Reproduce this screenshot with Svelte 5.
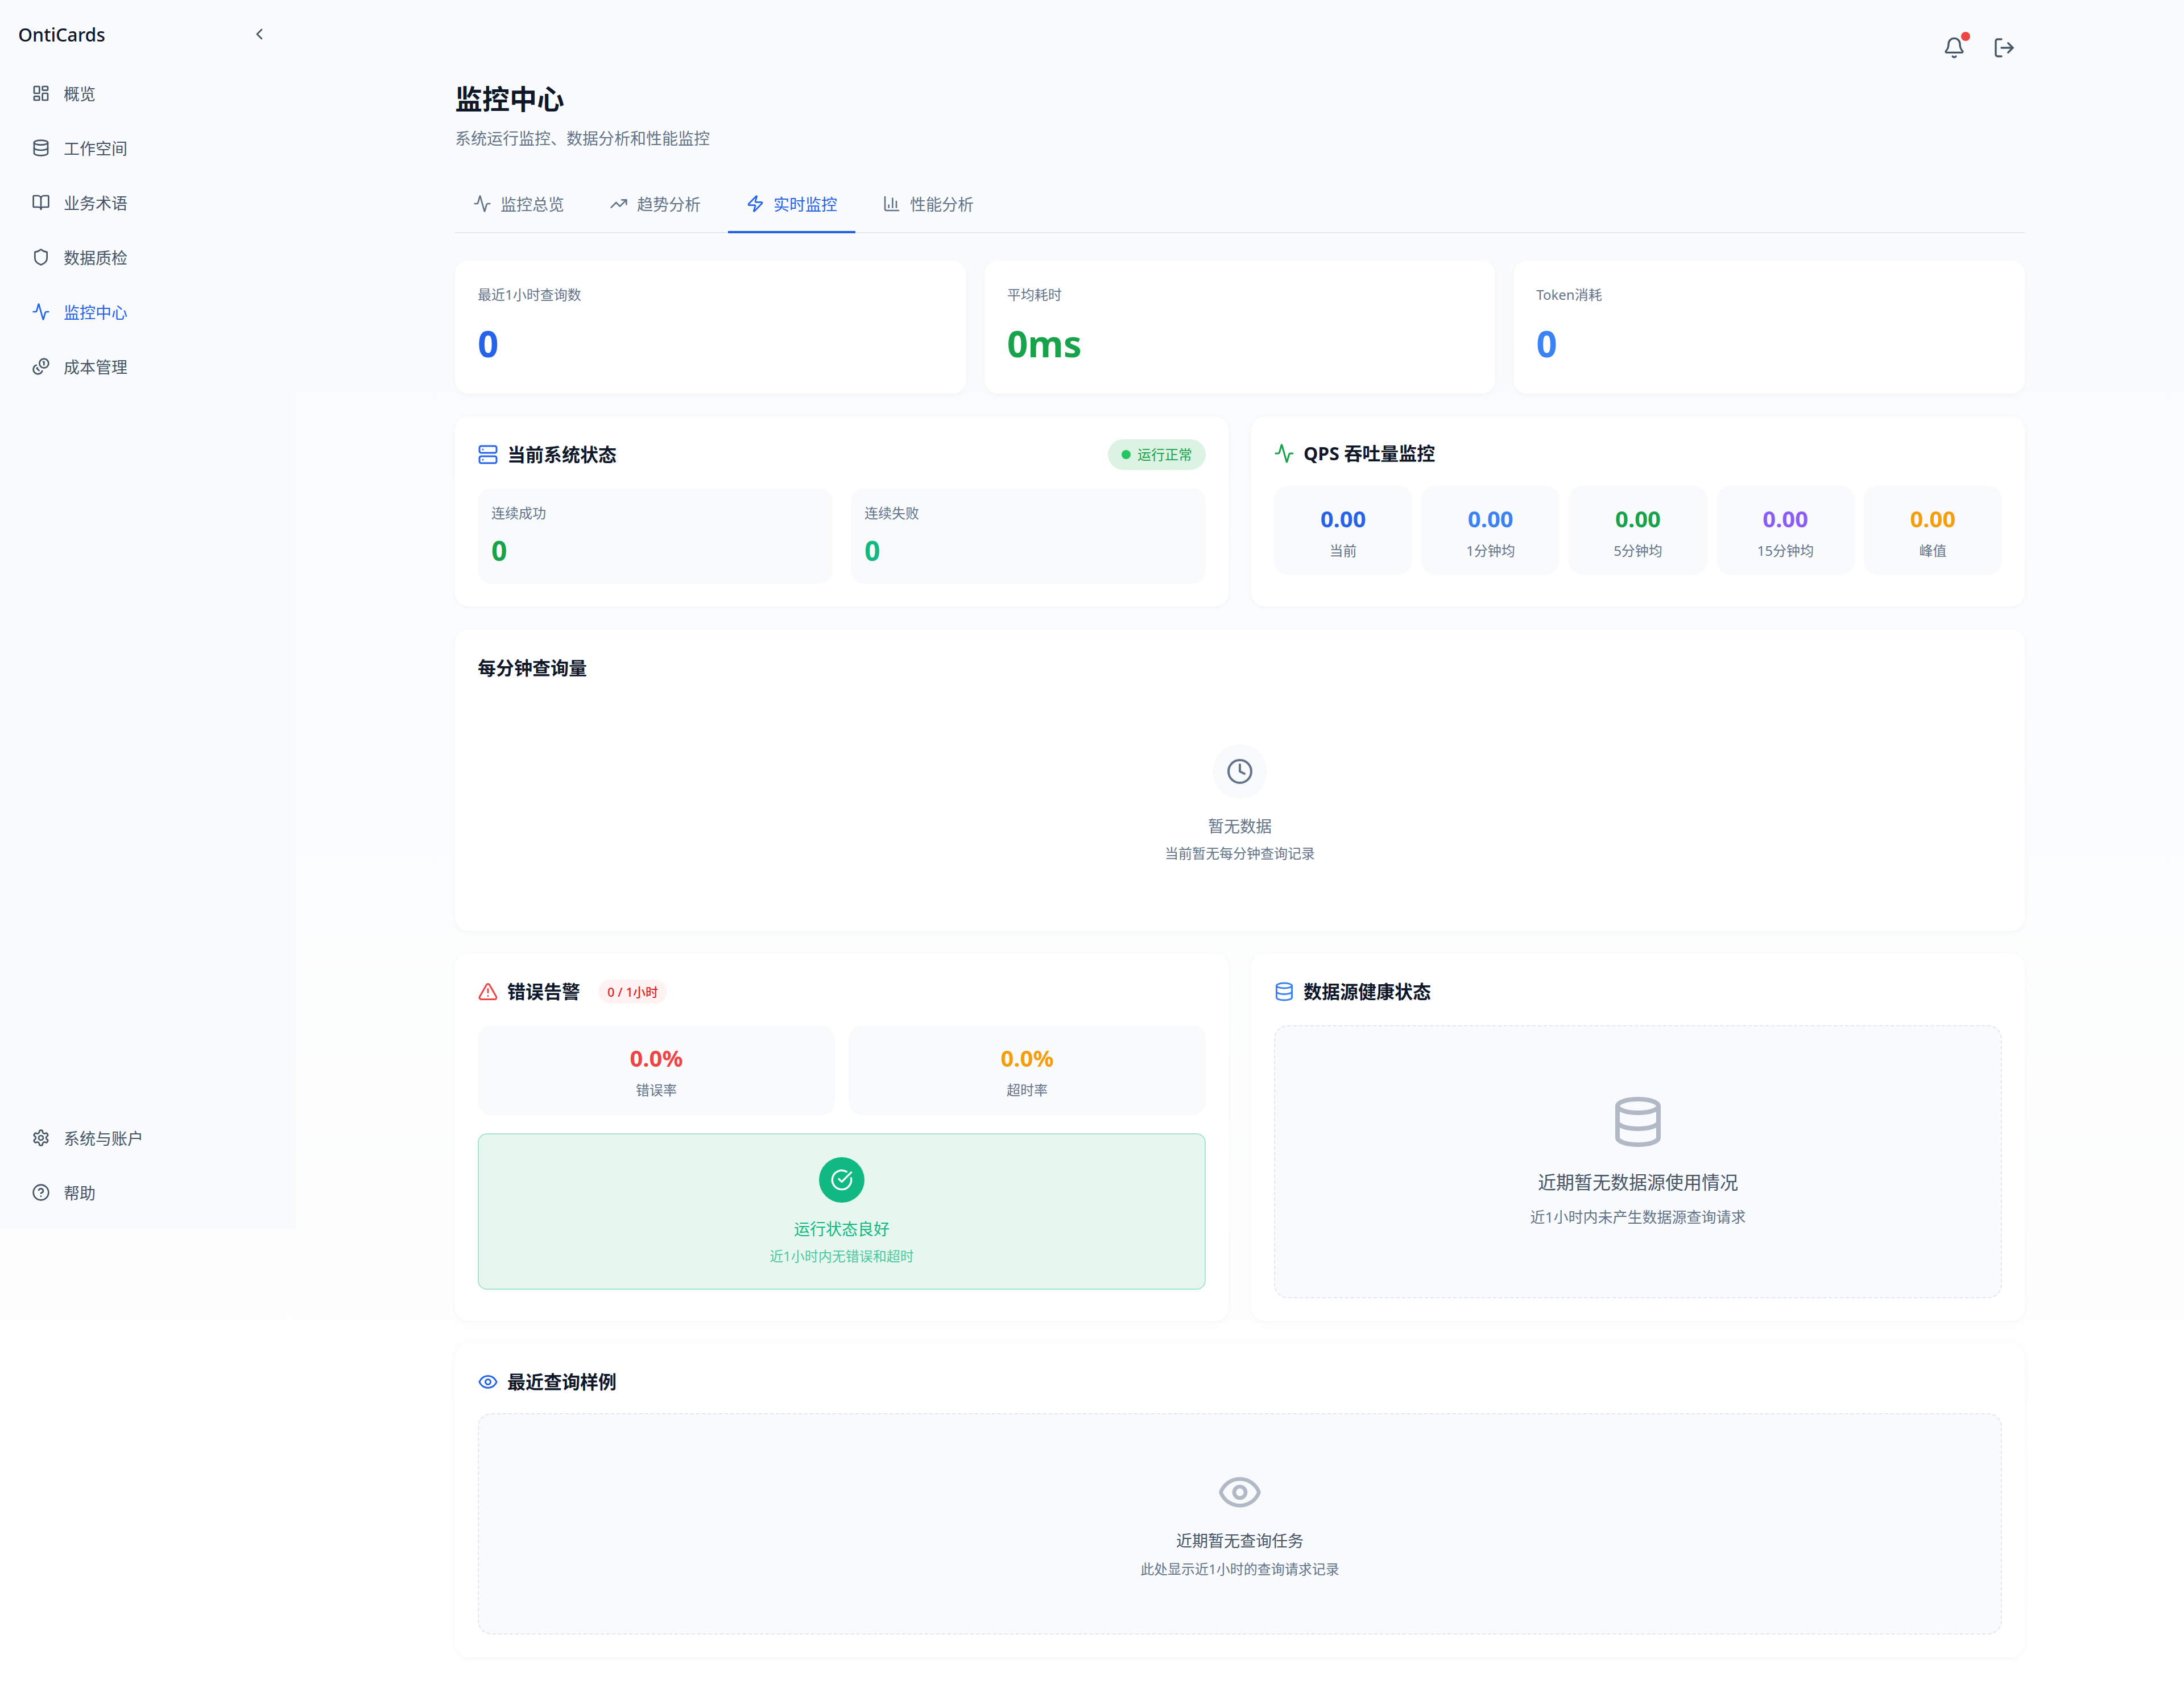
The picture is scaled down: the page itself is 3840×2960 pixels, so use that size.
<script>
  const ICONS = {
    dashboard: '<rect x="3" y="3" width="7" height="9" rx="1"/><rect x="14" y="3" width="7" height="5" rx="1"/><rect x="14" y="12" width="7" height="9" rx="1"/><rect x="3" y="16" width="7" height="5" rx="1"/>',
    database: '<ellipse cx="12" cy="5" rx="9" ry="3"/><path d="M3 5V19A9 3 0 0 0 21 19V5"/><path d="M3 12A9 3 0 0 0 21 12"/>',
    book: '<path d="M12 7v14"/><path d="M3 18a1 1 0 0 1-1-1V4a1 1 0 0 1 1-1h5a4 4 0 0 1 4 4 4 4 0 0 1 4-4h5a1 1 0 0 1 1 1v13a1 1 0 0 1-1 1h-6a3 3 0 0 0-3 3 3 3 0 0 0-3-3z"/>',
    shield: '<path d="M20 13c0 5-3.5 7.5-7.66 8.95a1 1 0 0 1-.67-.01C7.5 20.5 4 18 4 13V6a1 1 0 0 1 1-1c2 0 4.5-1.2 6.24-2.72a1.17 1.17 0 0 1 1.52 0C14.51 3.81 17 5 19 5a1 1 0 0 1 1 1z"/>',
    activity: '<path d="M22 12h-2.48a2 2 0 0 0-1.93 1.46l-2.35 8.36a.25.25 0 0 1-.48 0L9.24 2.18a.25.25 0 0 0-.48 0l-2.35 8.36A2 2 0 0 1 4.49 12H2"/>',
    coins: '<circle cx="16" cy="8" r="6"/><path d="M5.91 10.37A6 6 0 1 0 13.66 18"/><path d="M15 6h1v4"/><path d="m7.29 13.88-.7.71 2.82 2.82"/>',
    settings: '<path d="M12.22 2h-.44a2 2 0 0 0-2 2v.18a2 2 0 0 1-1 1.73l-.43.25a2 2 0 0 1-2 0l-.15-.08a2 2 0 0 0-2.73.73l-.22.38a2 2 0 0 0 .73 2.73l.15.1a2 2 0 0 1 1 1.72v.51a2 2 0 0 1-1 1.74l-.15.09a2 2 0 0 0-.73 2.73l.22.38a2 2 0 0 0 2.73.73l.15-.08a2 2 0 0 1 2 0l.43.25a2 2 0 0 1 1 1.73V20a2 2 0 0 0 2 2h.44a2 2 0 0 0 2-2v-.18a2 2 0 0 1 1-1.73l.43-.25a2 2 0 0 1 2 0l.15.08a2 2 0 0 0 2.73-.73l.22-.39a2 2 0 0 0-.73-2.73l-.15-.08a2 2 0 0 1-1-1.74v-.5a2 2 0 0 1 1-1.74l.15-.09a2 2 0 0 0 .73-2.73l-.22-.38a2 2 0 0 0-2.73-.73l-.15.08a2 2 0 0 1-2 0l-.43-.25a2 2 0 0 1-1-1.73V4a2 2 0 0 0-2-2z"/><circle cx="12" cy="12" r="3"/>',
    help: '<circle cx="12" cy="12" r="10"/><path d="M9.09 9a3 3 0 0 1 5.83 1c0 2-3 3-3 3"/><path d="M12 17h.01"/>',
    trending: '<polyline points="22 7 13.5 15.5 8.5 10.5 2 17"/><polyline points="16 7 22 7 22 13"/>',
    zap: '<path d="M4 14a1 1 0 0 1-.78-1.63l9.9-10.2a.5.5 0 0 1 .86.46l-1.92 6.02A1 1 0 0 0 13 10h7a1 1 0 0 1 .78 1.63l-9.9 10.2a.5.5 0 0 1-.86-.46l1.92-6.02A1 1 0 0 0 11 14z"/>',
    chart: '<path d="M3 3v16a2 2 0 0 0 2 2h16"/><path d="M18 17V9"/><path d="M13 17V5"/><path d="M8 17v-3"/>',
    server: '<rect width="20" height="8" x="2" y="2" rx="2"/><rect width="20" height="8" x="2" y="14" rx="2"/><line x1="6" x2="6.01" y1="6" y2="6"/><line x1="6" x2="6.01" y1="18" y2="18"/>',
    alert: '<path d="m21.73 18-8-14a2 2 0 0 0-3.48 0l-8 14A2 2 0 0 0 4 21h16a2 2 0 0 0 1.73-3"/><path d="M12 9v4"/><path d="M12 17h.01"/>',
    eye: '<path d="M2.062 12.348a1 1 0 0 1 0-.696 10.75 10.75 0 0 1 19.876 0 1 1 0 0 1 0 .696 10.75 10.75 0 0 1-19.876 0"/><circle cx="12" cy="12" r="3"/>',
    clock: '<circle cx="12" cy="12" r="10"/><polyline points="12 6 12 12 16 14"/>',
    bell: '<path d="M10.268 21a2 2 0 0 0 3.464 0"/><path d="M3.262 15.326A1 1 0 0 0 4 17h16a1 1 0 0 0 .74-1.673C19.41 13.956 18 12.499 18 8A6 6 0 0 0 6 8c0 4.499-1.411 5.956-2.738 7.326"/>',
    logout: '<path d="m16 17 5-5-5-5"/><path d="M21 12H9"/><path d="M9 21H5a2 2 0 0 1-2-2V5a2 2 0 0 1 2-2h4"/>',
    check: '<path d="M21.801 10A10 10 0 1 1 17 3.335"/><path d="m9 11 3 3L22 4"/>',
    chevron: '<path d="m15 18-6-6 6-6"/>'
  };

  const navTop = [
    { icon: 'dashboard', label: '概览' },
    { icon: 'database', label: '工作空间' },
    { icon: 'book', label: '业务术语' },
    { icon: 'shield', label: '数据质检' },
    { icon: 'activity', label: '监控中心', active: true },
    { icon: 'coins', label: '成本管理' }
  ];
  const navBottom = [
    { icon: 'settings', label: '系统与账户' },
    { icon: 'help', label: '帮助' }
  ];
  const tabs = [
    { icon: 'activity', label: '监控总览' },
    { icon: 'trending', label: '趋势分析' },
    { icon: 'zap', label: '实时监控', active: true },
    { icon: 'chart', label: '性能分析' }
  ];
  const stats = [
    { label: '最近1小时查询数', value: '0', color: 'blue' },
    { label: '平均耗时', value: '0ms', color: 'green' },
    { label: 'Token消耗', value: '0', color: 'sky' }
  ];
  const qps = [
    { label: '当前', color: 'blue' },
    { label: '1分钟均', color: 'sky' },
    { label: '5分钟均', color: 'green' },
    { label: '15分钟均', color: 'purple' },
    { label: '峰值', color: 'amber' }
  ];
</script>

{#snippet icon(name)}
  <svg class="icon" viewBox="0 0 24 24" fill="none" stroke="currentColor" stroke-width="2" stroke-linecap="round" stroke-linejoin="round">{@html ICONS[name]}</svg>
{/snippet}

{#snippet navItem(item)}
  <a class="nav-item" class:active={item.active} href="#nav">
    {@render icon(item.icon)}
    <span>{item.label}</span>
  </a>
{/snippet}

<div class="layout">
  <aside class="sidebar">
    <div>
      <div class="brand">
        <span class="logo">OntiCards</span>
        <button class="collapse">{@render icon('chevron')}</button>
      </div>
      <nav class="nav">
        {#each navTop as item}
          {@render navItem(item)}
        {/each}
      </nav>
    </div>
    <nav class="nav">
      {#each navBottom as item}
        {@render navItem(item)}
      {/each}
    </nav>
  </aside>

  <main class="main">
    <div class="topbar">
      <button class="top-btn">{@render icon('bell')}<span class="dot"></span></button>
      <button class="top-btn">{@render icon('logout')}</button>
    </div>

    <h1>监控中心</h1>
    <p class="subtitle">系统运行监控、数据分析和性能监控</p>

    <div class="tabs">
      {#each tabs as tab}
        <button class="tab" class:active={tab.active}>
          {@render icon(tab.icon)}
          <span>{tab.label}</span>
        </button>
      {/each}
    </div>

    <section class="stats">
      {#each stats as s}
        <div class="card stat">
          <div class="stat-label">{s.label}</div>
          <div class="stat-value {s.color}">{s.value}</div>
        </div>
      {/each}
    </section>

    <section class="two-col">
      <div class="card">
        <div class="card-head between">
          <h2 class="blue">{@render icon('server')}<span>当前系统状态</span></h2>
          <span class="badge-ok"><i></i>运行正常</span>
        </div>
        <div class="pair streak">
          <div class="tile left">
            <div class="tile-label">连续成功</div>
            <div class="tile-num green">0</div>
          </div>
          <div class="tile left">
            <div class="tile-label">连续失败</div>
            <div class="tile-num emerald">0</div>
          </div>
        </div>
      </div>

      <div class="card">
        <div class="card-head qps-head">
          <h2 class="green">{@render icon('activity')}<span>QPS 吞吐量监控</span></h2>
        </div>
        <div class="qps">
          {#each qps as q}
            <div class="tile center">
              <div class="tile-value {q.color}">0.00</div>
              <div class="tile-caption">{q.label}</div>
            </div>
          {/each}
        </div>
      </div>
    </section>

    <section class="card minute">
      <h2 class="plain"><span>每分钟查询量</span></h2>
      <div class="no-data">
        <div class="clock-wrap">{@render icon('clock')}</div>
        <div class="no-data-title">暂无数据</div>
        <div class="no-data-sub">当前暂无每分钟查询记录</div>
      </div>
    </section>

    <section class="two-col">
      <div class="card">
        <div class="card-head">
          <h2 class="red">{@render icon('alert')}<span>错误告警</span></h2>
          <span class="badge-err">0 / 1小时</span>
        </div>
        <div class="pair errors">
          <div class="tile center">
            <div class="tile-value red">0.0%</div>
            <div class="tile-caption">错误率</div>
          </div>
          <div class="tile center">
            <div class="tile-value amber">0.0%</div>
            <div class="tile-caption">超时率</div>
          </div>
        </div>
        <div class="healthy">
          <div class="healthy-icon">{@render icon('check')}</div>
          <div class="healthy-title">运行状态良好</div>
          <div class="healthy-sub">近1小时内无错误和超时</div>
        </div>
      </div>

      <div class="card">
        <div class="card-head">
          <h2 class="sky">{@render icon('database')}<span>数据源健康状态</span></h2>
        </div>
        <div class="empty sources">
          <span class="empty-db">{@render icon('database')}</span>
          <div class="empty-title large">近期暂无数据源使用情况</div>
          <div class="empty-sub wide">近1小时内未产生数据源查询请求</div>
        </div>
      </div>
    </section>

    <section class="card samples">
      <div class="card-head">
        <h2 class="blue">{@render icon('eye')}<span>最近查询样例</span></h2>
      </div>
      <div class="empty queries">
        <span class="empty-eye">{@render icon('eye')}</span>
        <div class="empty-title">近期暂无查询任务</div>
        <div class="empty-sub">此处显示近1小时的查询请求记录</div>
      </div>
    </section>
  </main>
</div>

<style>
  :global(body) {
    margin: 0;
    background: linear-gradient(180deg, #f8fafc 0%, #ffffff 100%);
    font-family: "Noto Sans", "Noto Sans CJK SC", sans-serif;
    color: #0f172a;
    min-height: 2960px;
  }

  .layout {
    display: flex;
    align-items: flex-start;
    min-height: 2960px;
  }

  .icon {
    display: block;
    flex: none;
    width: 32px;
    height: 32px;
  }

  button {
    background: none;
    border: none;
    padding: 0;
    font: inherit;
    color: inherit;
  }

  /* sidebar */
  .sidebar {
    flex: none;
    box-sizing: border-box;
    width: 520px;
    height: 2160px;
    background: #f8fafc;
    display: flex;
    flex-direction: column;
    justify-content: space-between;
    padding-bottom: 24px;
  }

  .brand {
    display: flex;
    align-items: center;
    justify-content: space-between;
    height: 120px;
    margin-bottom: 4px;
    padding: 0 48px 0 32px;
  }

  .logo {
    font-size: 32px;
    font-weight: 500;
    line-height: 44px;
    color: #0f172a;
    margin-top: 2px;
  }

  .collapse {
    color: #475569;
  }

  .nav {
    display: flex;
    flex-direction: column;
    gap: 16px;
  }

  .nav-item {
    display: flex;
    align-items: center;
    gap: 24px;
    height: 80px;
    padding-left: 56px;
    font-size: 28px;
    color: #475569;
    text-decoration: none;
  }

  .nav-item.active {
    color: #2563eb;
  }

  /* main column */
  .main {
    flex: 1;
    min-width: 0;
    box-sizing: border-box;
    padding: 48px 280px 48px;
  }

  .topbar {
    display: flex;
    justify-content: flex-end;
    gap: 16px;
    height: 72px;
  }

  .top-btn {
    position: relative;
    padding: 16px;
    color: #475569;
  }

  .top-btn .icon {
    width: 40px;
    height: 40px;
  }

  .dot {
    position: absolute;
    top: 8px;
    right: 8px;
    width: 16px;
    height: 16px;
    border-radius: 50%;
    background: #ef4444;
  }

  h1 {
    margin: 22px 0 0;
    font-size: 48px;
    font-weight: 700;
    line-height: 64px;
    color: #0f172a;
  }

  .subtitle {
    margin: 17px 0 0;
    font-size: 28px;
    line-height: 40px;
    color: #64748b;
  }

  .tabs {
    display: flex;
    gap: 16px;
    margin-top: 47px;
    border-bottom: 2px solid #e2e8f0;
  }

  .tab {
    display: flex;
    align-items: center;
    gap: 16px;
    height: 96px;
    padding: 0 32px;
    margin-bottom: -2px;
    border-bottom: 4px solid transparent;
    box-sizing: content-box;
    font-size: 28px;
    color: #64748b;
  }

  .tab.active {
    color: #2563eb;
    border-bottom-color: #2563eb;
  }

  /* cards */
  .card {
    box-sizing: border-box;
    background: #fff;
    border-radius: 24px;
    padding: 40px;
    box-shadow: 0 2px 8px rgba(15, 23, 42, 0.04);
  }

  .stats {
    display: grid;
    grid-template-columns: repeat(3, 1fr);
    gap: 32px;
    margin-top: 48px;
  }

  .stat {
    height: 234px;
  }

  .stat-label {
    font-size: 24px;
    line-height: 40px;
    color: #64748b;
  }

  .stat-value {
    margin-top: 26px;
    font-size: 64px;
    font-weight: 700;
    line-height: 80px;
  }

  .two-col {
    display: grid;
    grid-template-columns: 1fr 1fr;
    gap: 40px;
    margin-top: 40px;
  }

  .card-head {
    display: flex;
    align-items: center;
    gap: 32px;
    height: 54px;
    margin-bottom: 32px;
  }

  .between {
    justify-content: space-between;
  }

  h2 {
    display: flex;
    align-items: center;
    gap: 16px;
    margin: 0;
    font-size: 32px;
    font-weight: 700;
    line-height: 44px;
  }

  h2 .icon {
    width: 36px;
    height: 36px;
  }

  h2 span {
    color: #0f172a;
  }

  .blue { color: #2563eb; }
  .sky { color: #3b82f6; }
  .green { color: #16a34a; }
  .emerald { color: #10b981; }
  .purple { color: #8b5cf6; }
  .amber { color: #f59e0b; }
  .red { color: #ef4444; }

  .badge-ok {
    display: flex;
    align-items: center;
    gap: 12px;
    height: 54px;
    padding: 0 24px;
    border-radius: 27px;
    background: #dcf3e4;
    font-size: 24px;
    line-height: 32px;
    color: #16a34a;
  }

  .badge-ok i {
    width: 16px;
    height: 16px;
    border-radius: 50%;
    background: #22c55e;
  }

  .badge-err {
    height: 42px;
    padding: 0 16px;
    border-radius: 21px;
    background: #fef2f2;
    font-size: 22px;
    font-weight: 500;
    line-height: 42px;
    color: #dc2626;
  }

  .pair {
    display: grid;
    grid-template-columns: 1fr 1fr;
  }

  .streak {
    gap: 32px;
  }

  .errors {
    gap: 24px;
  }

  .tile {
    box-sizing: border-box;
    background: #f9fafb;
    border-radius: 24px;
  }

  .tile.left {
    height: 168px;
    padding: 24px;
  }

  .tile.center {
    height: 158px;
    padding-top: 24px;
    text-align: center;
  }

  .tile-label {
    font-size: 24px;
    line-height: 40px;
    color: #64748b;
  }

  .tile-num {
    margin-top: 16px;
    font-size: 48px;
    font-weight: 700;
    line-height: 60px;
  }

  .tile-value {
    font-size: 40px;
    font-weight: 700;
    line-height: 68px;
  }

  .tile-caption {
    margin-top: 6px;
    font-size: 24px;
    line-height: 32px;
    color: #64748b;
  }

  .qps-head {
    height: 50px;
  }

  .qps {
    display: grid;
    grid-template-columns: repeat(5, 1fr);
    gap: 16px;
  }

  .qps .tile.center {
    height: 156px;
  }

  /* per-minute empty state */
  .minute {
    height: 530px;
    margin-top: 40px;
  }

  .plain {
    margin-top: 6px;
  }

  .no-data {
    display: flex;
    flex-direction: column;
    align-items: center;
    margin-top: 112px;
  }

  .clock-wrap {
    display: flex;
    align-items: center;
    justify-content: center;
    width: 96px;
    height: 96px;
    border-radius: 50%;
    background: #f8fafc;
    color: #64748b;
  }

  .clock-wrap .icon {
    width: 48px;
    height: 48px;
  }

  .no-data-title {
    margin-top: 26px;
    font-size: 28px;
    line-height: 44px;
    color: #64748b;
  }

  .no-data-sub {
    margin-top: 10px;
    font-size: 24px;
    line-height: 32px;
    color: #64748b;
  }

  /* healthy box */
  .healthy {
    box-sizing: border-box;
    display: flex;
    flex-direction: column;
    align-items: center;
    margin-top: 32px;
    height: 275px;
    padding-top: 40px;
    background: #e7f7f0;
    border: 2px solid #a7e5cc;
    border-radius: 16px;
  }

  .healthy-icon {
    display: flex;
    align-items: center;
    justify-content: center;
    width: 80px;
    height: 80px;
    border-radius: 50%;
    background: #10b981;
    color: #fff;
  }

  .healthy-icon .icon {
    width: 40px;
    height: 40px;
  }

  .healthy-title {
    margin-top: 26px;
    font-size: 28px;
    line-height: 40px;
    color: #10b981;
  }

  .healthy-sub {
    margin-top: 12px;
    font-size: 24px;
    line-height: 32px;
    color: #4dc99f;
  }

  /* dashed empty states */
  .empty {
    box-sizing: border-box;
    display: flex;
    flex-direction: column;
    align-items: center;
    justify-content: center;
    background: #f8fafc;
    border: 2px dashed #e2e8f0;
    border-radius: 24px;
  }

  .sources {
    height: 480px;
    padding-bottom: 4px;
  }

  .queries {
    height: 389px;
  }

  .empty-db {
    color: #b0b9c5;
  }

  .empty-db .icon {
    width: 96px;
    height: 96px;
  }

  .empty-eye {
    color: #b0b9c5;
  }

  .empty-eye .icon {
    width: 80px;
    height: 80px;
  }

  .empty-title {
    margin-top: 25px;
    font-size: 28px;
    line-height: 40px;
    color: #475569;
  }

  .empty-title.large {
    margin-top: 34px;
    font-size: 32px;
    line-height: 48px;
  }

  .empty-sub {
    margin-top: 14px;
    font-size: 24px;
    line-height: 32px;
    color: #64748b;
  }

  .empty-sub.wide {
    margin-top: 19px;
    font-size: 26px;
    line-height: 36px;
  }

  .samples {
    margin-top: 40px;
  }

  .samples .card-head {
    margin-bottom: 28px;
  }
</style>
